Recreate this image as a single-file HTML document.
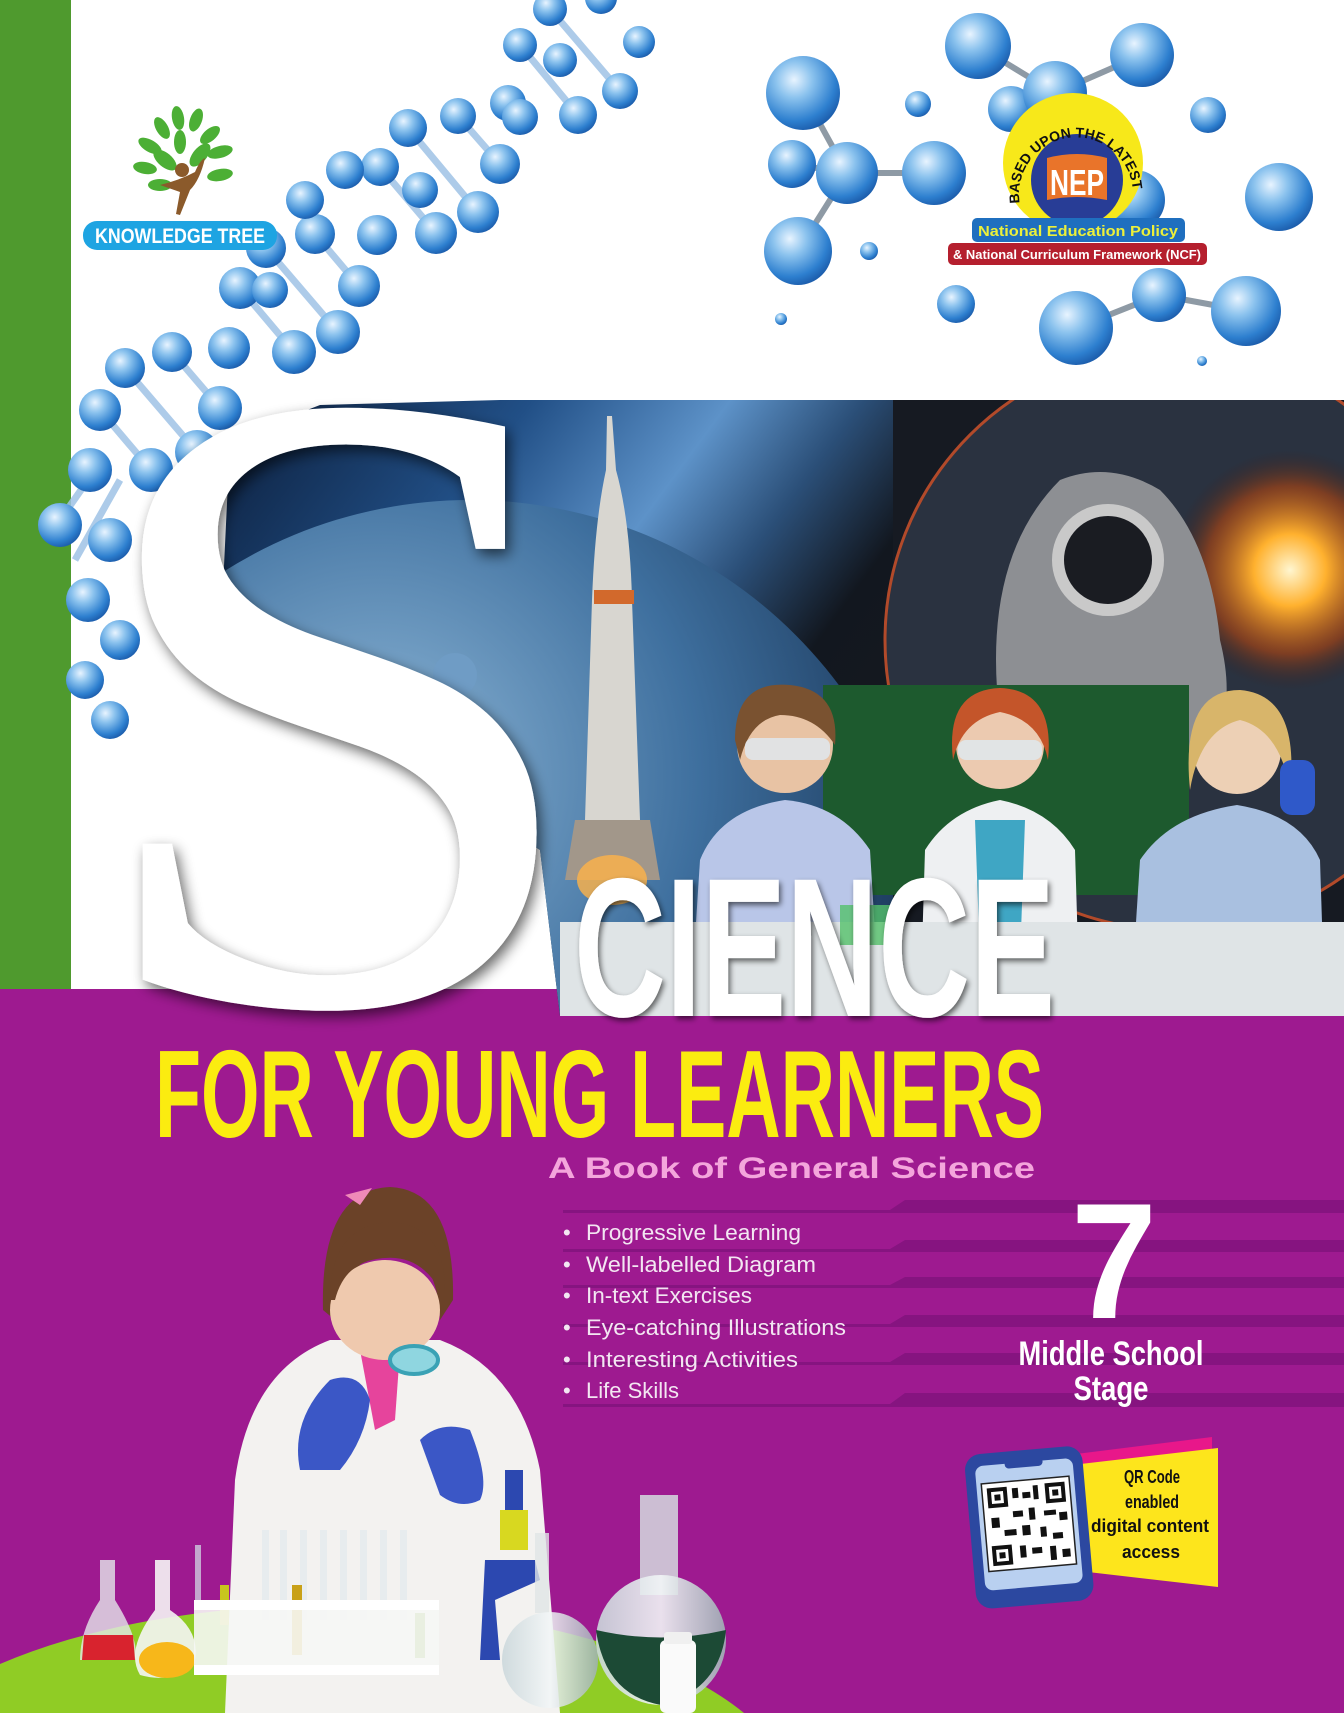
<!DOCTYPE html>
<html><head><meta charset="utf-8"><style>
html,body{margin:0;padding:0;background:#fff;width:1344px;height:1713px;overflow:hidden}
svg{display:block;overflow:hidden}
</style></head><body>
<svg width="1344" height="1713" viewBox="0 0 1344 1713" xmlns="http://www.w3.org/2000/svg">
<defs>
<radialGradient id="sph" cx="0.38" cy="0.32" r="0.7">
<stop offset="0" stop-color="#e8f4ff"/><stop offset="0.35" stop-color="#8cc3ee"/><stop offset="0.8" stop-color="#2d7fcf"/><stop offset="1" stop-color="#1d5fae"/></radialGradient>
<linearGradient id="sky" x1="0" y1="0" x2="1" y2="0.4">
<stop offset="0" stop-color="#0a1a35"/><stop offset="0.25" stop-color="#214f86"/><stop offset="0.4" stop-color="#5d92c8"/><stop offset="0.5" stop-color="#2b4f78"/><stop offset="0.6" stop-color="#12171f"/><stop offset="1" stop-color="#1e1c20"/></linearGradient>
<radialGradient id="planet" cx="0.4" cy="0.3" r="0.7">
<stop offset="0" stop-color="#8fb8d8"/><stop offset="0.5" stop-color="#3e6f9e"/><stop offset="1" stop-color="#0e2340"/></radialGradient>
<radialGradient id="sun" cx="0.5" cy="0.5" r="0.5">
<stop offset="0" stop-color="#fff6d0"/><stop offset="0.3" stop-color="#ffb12e"/><stop offset="0.7" stop-color="#b5460f" stop-opacity="0.6"/><stop offset="1" stop-color="#3a1a10" stop-opacity="0"/></radialGradient>
<linearGradient id="glass" x1="0" y1="0" x2="1" y2="0"><stop offset="0" stop-color="#c9d6da"/><stop offset="0.5" stop-color="#f2f6f7"/><stop offset="1" stop-color="#9fb0b5"/></linearGradient>
<filter id="sh" x="-10%" y="-10%" width="130%" height="130%"><feGaussianBlur in="SourceAlpha" stdDeviation="7"/><feOffset dx="4" dy="6"/><feComponentTransfer><feFuncA type="linear" slope="0.6"/></feComponentTransfer><feMerge><feMergeNode/><feMergeNode in="SourceGraphic"/></feMerge></filter>
<filter id="sh2"><feGaussianBlur in="SourceAlpha" stdDeviation="3"/><feOffset dx="2" dy="3"/><feComponentTransfer><feFuncA type="linear" slope="0.6"/></feComponentTransfer><feMerge><feMergeNode/><feMergeNode in="SourceGraphic"/></feMerge></filter>
<clipPath id="photo"><polygon points="230,440 320,405 500,400 1344,400 1344,1016 560,1016 540,850 220,650"/></clipPath>
</defs>

<rect width="1344" height="1713" fill="#fff"/>
<rect x="0" y="0" width="71" height="989" fill="#4f9a2e"/>
<rect x="0" y="989" width="1344" height="724" fill="#9e1a90"/>

<!-- DNA -->
<g stroke="#9fc3e6" stroke-width="7" opacity="0.85">
<line x1="151" y1="470" x2="100" y2="410"/><line x1="197" y1="452" x2="125" y2="368"/><line x1="220" y1="408" x2="172" y2="352"/><line x1="240" y1="288" x2="294" y2="352"/><line x1="266" y1="248" x2="338" y2="332"/><line x1="315" y1="234" x2="359" y2="286"/><line x1="436" y1="233" x2="380" y2="167"/><line x1="478" y1="212" x2="408" y2="128"/><line x1="500" y1="164" x2="458" y2="116"/><line x1="520" y1="45" x2="578" y2="115"/><line x1="550" y1="9" x2="620" y2="91"/>
<line x1="95" y1="470" x2="60" y2="520"/><line x1="120" y1="480" x2="75" y2="560"/>
</g>
<g fill="url(#sph)">
<circle cx="90" cy="470" r="22"/><circle cx="151" cy="470" r="22"/><circle cx="100" cy="410" r="21"/><circle cx="197" cy="452" r="22"/><circle cx="125" cy="368" r="20"/><circle cx="220" cy="408" r="22"/><circle cx="172" cy="352" r="20"/><circle cx="229" cy="348" r="21"/><circle cx="240" cy="288" r="21"/><circle cx="294" cy="352" r="22"/><circle cx="266" cy="248" r="20"/><circle cx="338" cy="332" r="22"/><circle cx="315" cy="234" r="20"/><circle cx="359" cy="286" r="21"/><circle cx="377" cy="235" r="20"/><circle cx="436" cy="233" r="21"/><circle cx="380" cy="167" r="19"/><circle cx="478" cy="212" r="21"/><circle cx="408" cy="128" r="19"/><circle cx="500" cy="164" r="20"/><circle cx="458" cy="116" r="18"/><circle cx="508" cy="103" r="18"/><circle cx="520" cy="117" r="18"/><circle cx="520" cy="45" r="17"/><circle cx="578" cy="115" r="19"/><circle cx="550" cy="9" r="17"/><circle cx="620" cy="91" r="18"/><circle cx="601" cy="-2" r="16"/><circle cx="639" cy="42" r="16"/>
<circle cx="60" cy="525" r="22"/><circle cx="110" cy="540" r="22"/><circle cx="88" cy="600" r="22"/><circle cx="120" cy="640" r="20"/><circle cx="85" cy="680" r="19"/><circle cx="110" cy="720" r="19"/>
<circle cx="305" cy="200" r="19"/><circle cx="345" cy="170" r="19"/><circle cx="270" cy="290" r="18"/><circle cx="420" cy="190" r="18"/><circle cx="560" cy="60" r="17"/>
</g>

<!-- molecules -->
<g stroke="#8e9aa5" stroke-width="6">
<line x1="847" y1="173" x2="934" y2="173"/><line x1="847" y1="173" x2="792" y2="164"/><line x1="847" y1="173" x2="798" y2="251"/><line x1="978" y1="46" x2="1055" y2="93"/><line x1="1055" y1="93" x2="1142" y2="55"/><line x1="1159" y1="295" x2="1246" y2="311"/><line x1="1076" y1="328" x2="1159" y2="295"/><line x1="803" y1="93" x2="847" y2="173"/>
</g>
<g fill="url(#sph)">
<circle cx="803" cy="93" r="37"/><circle cx="978" cy="46" r="33"/><circle cx="1142" cy="55" r="32"/><circle cx="918" cy="104" r="13"/><circle cx="1011" cy="109" r="23"/><circle cx="1055" cy="93" r="32"/><circle cx="1208" cy="115" r="18"/><circle cx="792" cy="164" r="24"/><circle cx="847" cy="173" r="31"/><circle cx="934" cy="173" r="32"/><circle cx="1279" cy="197" r="34"/><circle cx="798" cy="251" r="34"/><circle cx="869" cy="251" r="9"/><circle cx="956" cy="304" r="19"/><circle cx="1076" cy="328" r="37"/><circle cx="1246" cy="311" r="35"/><circle cx="781" cy="319" r="6"/><circle cx="1202" cy="361" r="5"/><circle cx="1159" cy="295" r="27"/><circle cx="1135" cy="200" r="30"/>
</g>

<!-- NEP badge -->
<circle cx="1073" cy="163" r="70" fill="#f7e81a"/>
<circle cx="1077" cy="180" r="46" fill="#283d96"/>
<path d="M1047 158 Q1077 150 1107 158 L1107 200 Q1077 194 1047 200 Z" fill="#e9742a"/>
<text x="1077" y="195" font-family="Liberation Sans" font-weight="bold" font-size="36" fill="#fff" text-anchor="middle" textLength="54" lengthAdjust="spacingAndGlyphs">NEP</text>
<path id="arc" d="M1020 205 A57 57 0 1 1 1132 205" fill="none"/>
<text font-family="Liberation Sans" font-weight="bold" font-size="14" fill="#111"><textPath href="#arc" startOffset="1%">BASED UPON THE LATEST</textPath></text>
<rect x="972" y="218" width="213" height="24" rx="5" fill="#1f6fbf"/>
<text x="1078" y="236" font-family="Liberation Sans" font-weight="bold" font-size="15" fill="#ecf03a" text-anchor="middle" textLength="200" lengthAdjust="spacingAndGlyphs">National Education Policy</text>
<rect x="948" y="243" width="259" height="22" rx="5" fill="#b51f2e"/>
<text x="1077" y="259" font-family="Liberation Sans" font-weight="bold" font-size="13" fill="#fff" text-anchor="middle" textLength="248" lengthAdjust="spacingAndGlyphs">&amp; National Curriculum Framework (NCF)</text>

<!-- Knowledge tree logo -->
<g fill="#4caf35">
<ellipse cx="150" cy="146" rx="13" ry="6" transform="rotate(30 150 146)"/><ellipse cx="162" cy="128" rx="12" ry="6" transform="rotate(60 162 128)"/><ellipse cx="178" cy="118" rx="12" ry="6" transform="rotate(80 178 118)"/><ellipse cx="196" cy="120" rx="12" ry="6" transform="rotate(110 196 120)"/><ellipse cx="210" cy="135" rx="12" ry="6" transform="rotate(140 210 135)"/><ellipse cx="220" cy="152" rx="13" ry="6" transform="rotate(165 220 152)"/><ellipse cx="145" cy="168" rx="12" ry="6" transform="rotate(10 145 168)"/><ellipse cx="220" cy="175" rx="13" ry="6" transform="rotate(-10 220 175)"/><ellipse cx="165" cy="160" rx="14" ry="7" transform="rotate(40 165 160)"/><ellipse cx="200" cy="155" rx="14" ry="7" transform="rotate(130 200 155)"/><ellipse cx="180" cy="142" rx="12" ry="6" transform="rotate(90 180 142)"/><ellipse cx="160" cy="185" rx="12" ry="6"/>
</g>
<circle cx="182" cy="170" r="7" fill="#8b5a2b"/>
<path d="M160 185 Q180 180 195 172 Q200 160 205 158 Q200 180 190 190 L180 215 L176 214 L180 192 Z" fill="#8b5a2b"/>
<rect x="83" y="221" width="194" height="29" rx="14" fill="#1ea4e2"/>
<text x="180" y="243" font-family="Liberation Sans" font-weight="bold" font-size="21" fill="#fff" text-anchor="middle" textLength="170" lengthAdjust="spacingAndGlyphs">KNOWLEDGE TREE</text>

<!-- photo panel -->
<g clip-path="url(#photo)">
<rect x="200" y="400" width="1144" height="620" fill="url(#sky)"/>
<circle cx="470" cy="960" r="460" fill="url(#planet)"/>
<circle cx="455" cy="675" r="22" fill="#6f9cc5"/>
<rect x="893" y="400" width="451" height="620" fill="#161a22"/>
<circle cx="1175" cy="640" r="290" fill="#2a3240" stroke="#b24a2a" stroke-width="3"/>
<circle cx="1290" cy="570" r="120" fill="url(#sun)"/>
<path d="M1000 720 Q980 560 1060 480 Q1110 460 1160 490 Q1210 540 1220 640 Q1240 720 1200 760 L1020 770 Z" fill="#8d8f93"/>
<circle cx="1108" cy="560" r="50" fill="#1a1c22" stroke="#c9c9c9" stroke-width="12"/>
<path d="M607 416 L612 416 L616 470 Q630 520 632 600 L640 820 L585 820 L592 600 Q595 520 606 470 Z" fill="#d8d6d0"/>
<rect x="594" y="590" width="40" height="14" fill="#d2692c"/>
<path d="M575 820 L650 820 L660 880 L565 880 Z" fill="#a2978a"/>
<ellipse cx="612" cy="880" rx="35" ry="25" fill="#ffb347" opacity="0.8"/>
<rect x="823" y="685" width="366" height="210" fill="#1d5a2e"/>
<path d="M690 1016 L700 860 Q720 810 785 800 Q840 805 870 850 L880 1016 Z" fill="#b9c6e8"/>
<circle cx="785" cy="745" r="48" fill="#e8c3a4"/>
<path d="M735 740 Q735 680 790 685 Q840 690 835 745 Q815 715 780 715 Q750 720 740 760 Z" fill="#7a5230"/>
<rect x="745" y="738" width="85" height="22" rx="8" fill="#dfeaf2" opacity="0.8"/>
<path d="M920 1016 L925 850 Q950 810 1000 800 Q1050 810 1075 850 L1080 1016 Z" fill="#eef0f2"/>
<path d="M975 820 L1025 820 L1020 960 L980 960 Z" fill="#3fa6c4"/>
<circle cx="1000" cy="745" r="44" fill="#eccab0"/>
<path d="M953 760 Q945 690 1000 688 Q1055 690 1048 760 Q1040 720 1000 712 Q962 720 953 760 Z" fill="#c4552a"/>
<rect x="958" y="740" width="84" height="20" rx="8" fill="#dfeaf2" opacity="0.8"/>
<path d="M1130 1016 L1140 860 Q1170 815 1237 805 Q1300 815 1320 860 L1325 1016 Z" fill="#a9c0e0"/>
<circle cx="1237" cy="750" r="44" fill="#edd0b5"/>
<path d="M1190 790 Q1180 690 1240 690 Q1300 695 1290 790 Q1280 730 1240 720 Q1200 730 1190 790 Z" fill="#d8b56a"/>
<rect x="1280" y="760" width="35" height="55" rx="12" fill="#2f59c9"/>
<rect x="1200" y="940" width="40" height="25" rx="10" fill="#2f59c9"/>
<rect x="560" y="922" width="784" height="100" fill="#dfe4e6"/>
<rect x="840" y="905" width="60" height="40" fill="#54c06a" opacity="0.8"/>
</g>

<!-- Big S -->
<g filter="url(#sh)">
<text transform="translate(80 1002) scale(1.05 1.02)" font-family="Liberation Serif" font-size="880" fill="#fff">S</text>
</g>
<g filter="url(#sh2)">
<text x="574" y="1016" font-family="Liberation Sans" font-weight="bold" font-size="198" fill="#fff" textLength="481" lengthAdjust="spacingAndGlyphs">CIENCE</text>
</g>

<!-- stripes -->
<g fill="#861480">
<polygon points="563,1210 890,1210 905,1200 1344,1200 1344,1213 563,1213"/>
<polygon points="563,1249 890,1249 905,1240 1344,1240 1344,1252 563,1252"/>
<polygon points="563,1285 890,1285 905,1277 1344,1277 1344,1288 563,1288"/>
<polygon points="563,1324 890,1324 905,1315 1344,1315 1344,1327 563,1327"/>
<polygon points="563,1362 890,1362 905,1353 1344,1353 1344,1365 563,1365"/>
<polygon points="563,1404 890,1404 905,1393 1344,1393 1344,1407 563,1407"/>
</g>

<text x="155" y="1137" font-family="Liberation Sans" font-weight="bold" font-size="124" fill="#fbec10" textLength="889" lengthAdjust="spacingAndGlyphs">FOR YOUNG LEARNERS</text>
<text x="548" y="1178" font-family="Liberation Sans" font-weight="bold" font-size="30" fill="#f4a6dc" textLength="487" lengthAdjust="spacingAndGlyphs">A Book of General Science</text>

<g font-family="Liberation Sans" font-size="22" fill="#f3e6f2">
<text x="563" y="1240">•</text><text x="586" y="1240" textLength="215" lengthAdjust="spacingAndGlyphs">Progressive Learning</text>
<text x="563" y="1272">•</text><text x="586" y="1272" textLength="230" lengthAdjust="spacingAndGlyphs">Well-labelled Diagram</text>
<text x="563" y="1303">•</text><text x="586" y="1303" textLength="166" lengthAdjust="spacingAndGlyphs">In-text Exercises</text>
<text x="563" y="1335">•</text><text x="586" y="1335" textLength="260" lengthAdjust="spacingAndGlyphs">Eye-catching Illustrations</text>
<text x="563" y="1367">•</text><text x="586" y="1367" textLength="212" lengthAdjust="spacingAndGlyphs">Interesting Activities</text>
<text x="563" y="1398">•</text><text x="586" y="1398" textLength="93" lengthAdjust="spacingAndGlyphs">Life Skills</text>
</g>

<text x="1071" y="1318" font-family="Liberation Sans" font-weight="bold" font-size="165" fill="#fff" textLength="86" lengthAdjust="spacingAndGlyphs">7</text>
<text x="1111" y="1365" font-family="Liberation Sans" font-weight="bold" font-size="34" fill="#fff" text-anchor="middle" textLength="185" lengthAdjust="spacingAndGlyphs">Middle School</text>
<text x="1111" y="1400" font-family="Liberation Sans" font-weight="bold" font-size="34" fill="#fff" text-anchor="middle" textLength="75" lengthAdjust="spacingAndGlyphs">Stage</text>

<!-- QR -->
<polygon points="1068,1455 1212,1437 1212,1578 1085,1566" fill="#e8178a"/>
<polygon points="1072,1465 1218,1448 1218,1587 1088,1572" fill="#fde51c"/>
<g font-family="Liberation Sans" font-weight="bold" fill="#111" text-anchor="middle">
<text x="1152" y="1483" font-size="18" textLength="56" lengthAdjust="spacingAndGlyphs">QR Code</text>
<text x="1152" y="1508" font-size="18" textLength="54" lengthAdjust="spacingAndGlyphs">enabled</text>
<text x="1150" y="1532" font-size="18" textLength="118" lengthAdjust="spacingAndGlyphs">digital content</text>
<text x="1151" y="1558" font-size="18" textLength="58" lengthAdjust="spacingAndGlyphs">access</text>
</g>
<g transform="rotate(-5 1028 1525)">
<rect x="970" y="1450" width="118" height="155" rx="16" fill="#2c48a0"/>
<rect x="980" y="1462" width="98" height="125" rx="8" fill="#b9d0f0"/>
<rect x="1010" y="1458" width="38" height="9" rx="4" fill="#2c48a0"/>
<rect x="985" y="1480" width="88" height="88" fill="#fff" stroke="#222" stroke-width="1.5"/>
<g fill="#111">
<rect x="990" y="1485" width="20" height="20"/><rect x="1048" y="1485" width="20" height="20"/><rect x="990" y="1543" width="20" height="20"/>
<rect x="1015" y="1487" width="6" height="10"/><rect x="1025" y="1492" width="8" height="6"/><rect x="1036" y="1486" width="5" height="14"/><rect x="1014" y="1510" width="10" height="6"/><rect x="1030" y="1508" width="6" height="12"/><rect x="1045" y="1512" width="12" height="5"/><rect x="1060" y="1515" width="8" height="8"/><rect x="992" y="1515" width="8" height="10"/><rect x="1004" y="1528" width="12" height="6"/><rect x="1022" y="1525" width="8" height="10"/><rect x="1040" y="1528" width="6" height="10"/><rect x="1052" y="1535" width="10" height="6"/><rect x="1018" y="1545" width="6" height="12"/><rect x="1030" y="1548" width="10" height="6"/><rect x="1048" y="1548" width="6" height="14"/><rect x="1060" y="1552" width="8" height="8"/>
</g>
<g fill="#fff"><rect x="994" y="1489" width="12" height="12"/><rect x="1052" y="1489" width="12" height="12"/><rect x="994" y="1547" width="12" height="12"/></g>
<g fill="#111"><rect x="997" y="1492" width="6" height="6"/><rect x="1055" y="1492" width="6" height="6"/><rect x="997" y="1550" width="6" height="6"/></g>
</g>

<!-- green ground -->
<ellipse cx="330" cy="1810" rx="470" ry="205" fill="#90cc25"/>

<!-- girl -->
<path d="M225 1713 L235 1480 Q250 1370 330 1340 L440 1340 Q520 1370 540 1470 L560 1713 Z" fill="#f3f2f0"/>
<path d="M360 1350 L400 1350 L395 1420 L375 1430 Z" fill="#e6449c"/>
<path d="M323 1310 Q320 1190 390 1187 Q455 1190 453 1300 L440 1320 Q438 1260 400 1245 Q350 1250 335 1320 Z" fill="#6b4228"/>
<ellipse cx="385" cy="1310" rx="55" ry="50" fill="#efc9ae"/>
<path d="M330 1300 Q330 1225 390 1222 Q445 1225 445 1290 L440 1290 Q420 1255 385 1258 Q345 1260 335 1300 Z" fill="#6b4228"/>
<path d="M345 1195 L372 1188 L360 1205 Z" fill="#ef8ab8"/>
<ellipse cx="414" cy="1360" rx="24" ry="14" fill="#8fd6e0" stroke="#3aa2b5" stroke-width="4"/>
<path d="M300 1470 Q290 1420 330 1380 Q360 1370 370 1400 Q365 1440 340 1470 Z" fill="#3b57c6"/>
<path d="M420 1440 Q440 1420 470 1430 Q490 1480 480 1500 Q460 1510 440 1495 Z" fill="#3b57c6"/>

<!-- lab equipment -->
<path d="M100 1560 L115 1560 L115 1600 Q140 1640 135 1660 L80 1660 Q80 1630 100 1600 Z" fill="#e3e7ea" opacity="0.8"/>
<path d="M84 1635 L133 1635 L135 1660 L82 1660 Z" fill="#d8232e"/>
<path d="M155 1560 L170 1560 L170 1610 Q200 1630 195 1660 Q175 1685 140 1675 Q125 1650 155 1610 Z" fill="#f5f5f5" opacity="0.9"/>
<ellipse cx="167" cy="1660" rx="28" ry="18" fill="#f7b71a"/>
<rect x="195" y="1545" width="6" height="60" fill="#ccd" opacity="0.8"/>
<g fill="#e6ecee" opacity="0.9">
<rect x="262" y="1530" width="7" height="90"/><rect x="280" y="1530" width="7" height="90"/><rect x="300" y="1530" width="7" height="90"/><rect x="320" y="1530" width="7" height="90"/><rect x="340" y="1530" width="7" height="90"/><rect x="360" y="1530" width="7" height="90"/><rect x="380" y="1530" width="7" height="90"/><rect x="400" y="1530" width="7" height="90"/>
</g>
<rect x="292" y="1585" width="10" height="70" fill="#c9a118"/>
<rect x="220" y="1585" width="9" height="40" fill="#c8c61e"/>
<rect x="415" y="1613" width="10" height="45" fill="#6fa02a"/>
<path d="M194 1600 L439 1600 L439 1675 L194 1675 Z" fill="#f6f7f5" opacity="0.9"/>
<rect x="194" y="1600" width="245" height="10" fill="#fff"/>
<rect x="194" y="1665" width="245" height="10" fill="#fff"/>
<rect x="505" y="1470" width="18" height="40" fill="#2c48b0"/>
<rect x="500" y="1510" width="28" height="40" fill="#d8d820"/>
<path d="M485 1560 L535 1560 L540 1580 L495 1600 L500 1660 L480 1660 Z" fill="#2c48b0"/>
<rect x="535" y="1533" width="14" height="80" fill="#e0e5e6" opacity="0.8"/>
<circle cx="550" cy="1660" r="48" fill="url(#glass)" opacity="0.85"/>
<rect x="640" y="1495" width="38" height="100" fill="#d4dcdf" opacity="0.85"/>
<circle cx="661" cy="1640" r="65" fill="url(#glass)" opacity="0.9"/>
<path d="M596 1630 Q661 1645 726 1630 Q720 1690 661 1705 Q605 1695 596 1630 Z" fill="#1c4a35"/>
<rect x="660" y="1640" width="36" height="73" rx="6" fill="#fafafa"/>
<rect x="664" y="1632" width="28" height="12" rx="3" fill="#f0f0f0"/>
</svg>
</body></html>
